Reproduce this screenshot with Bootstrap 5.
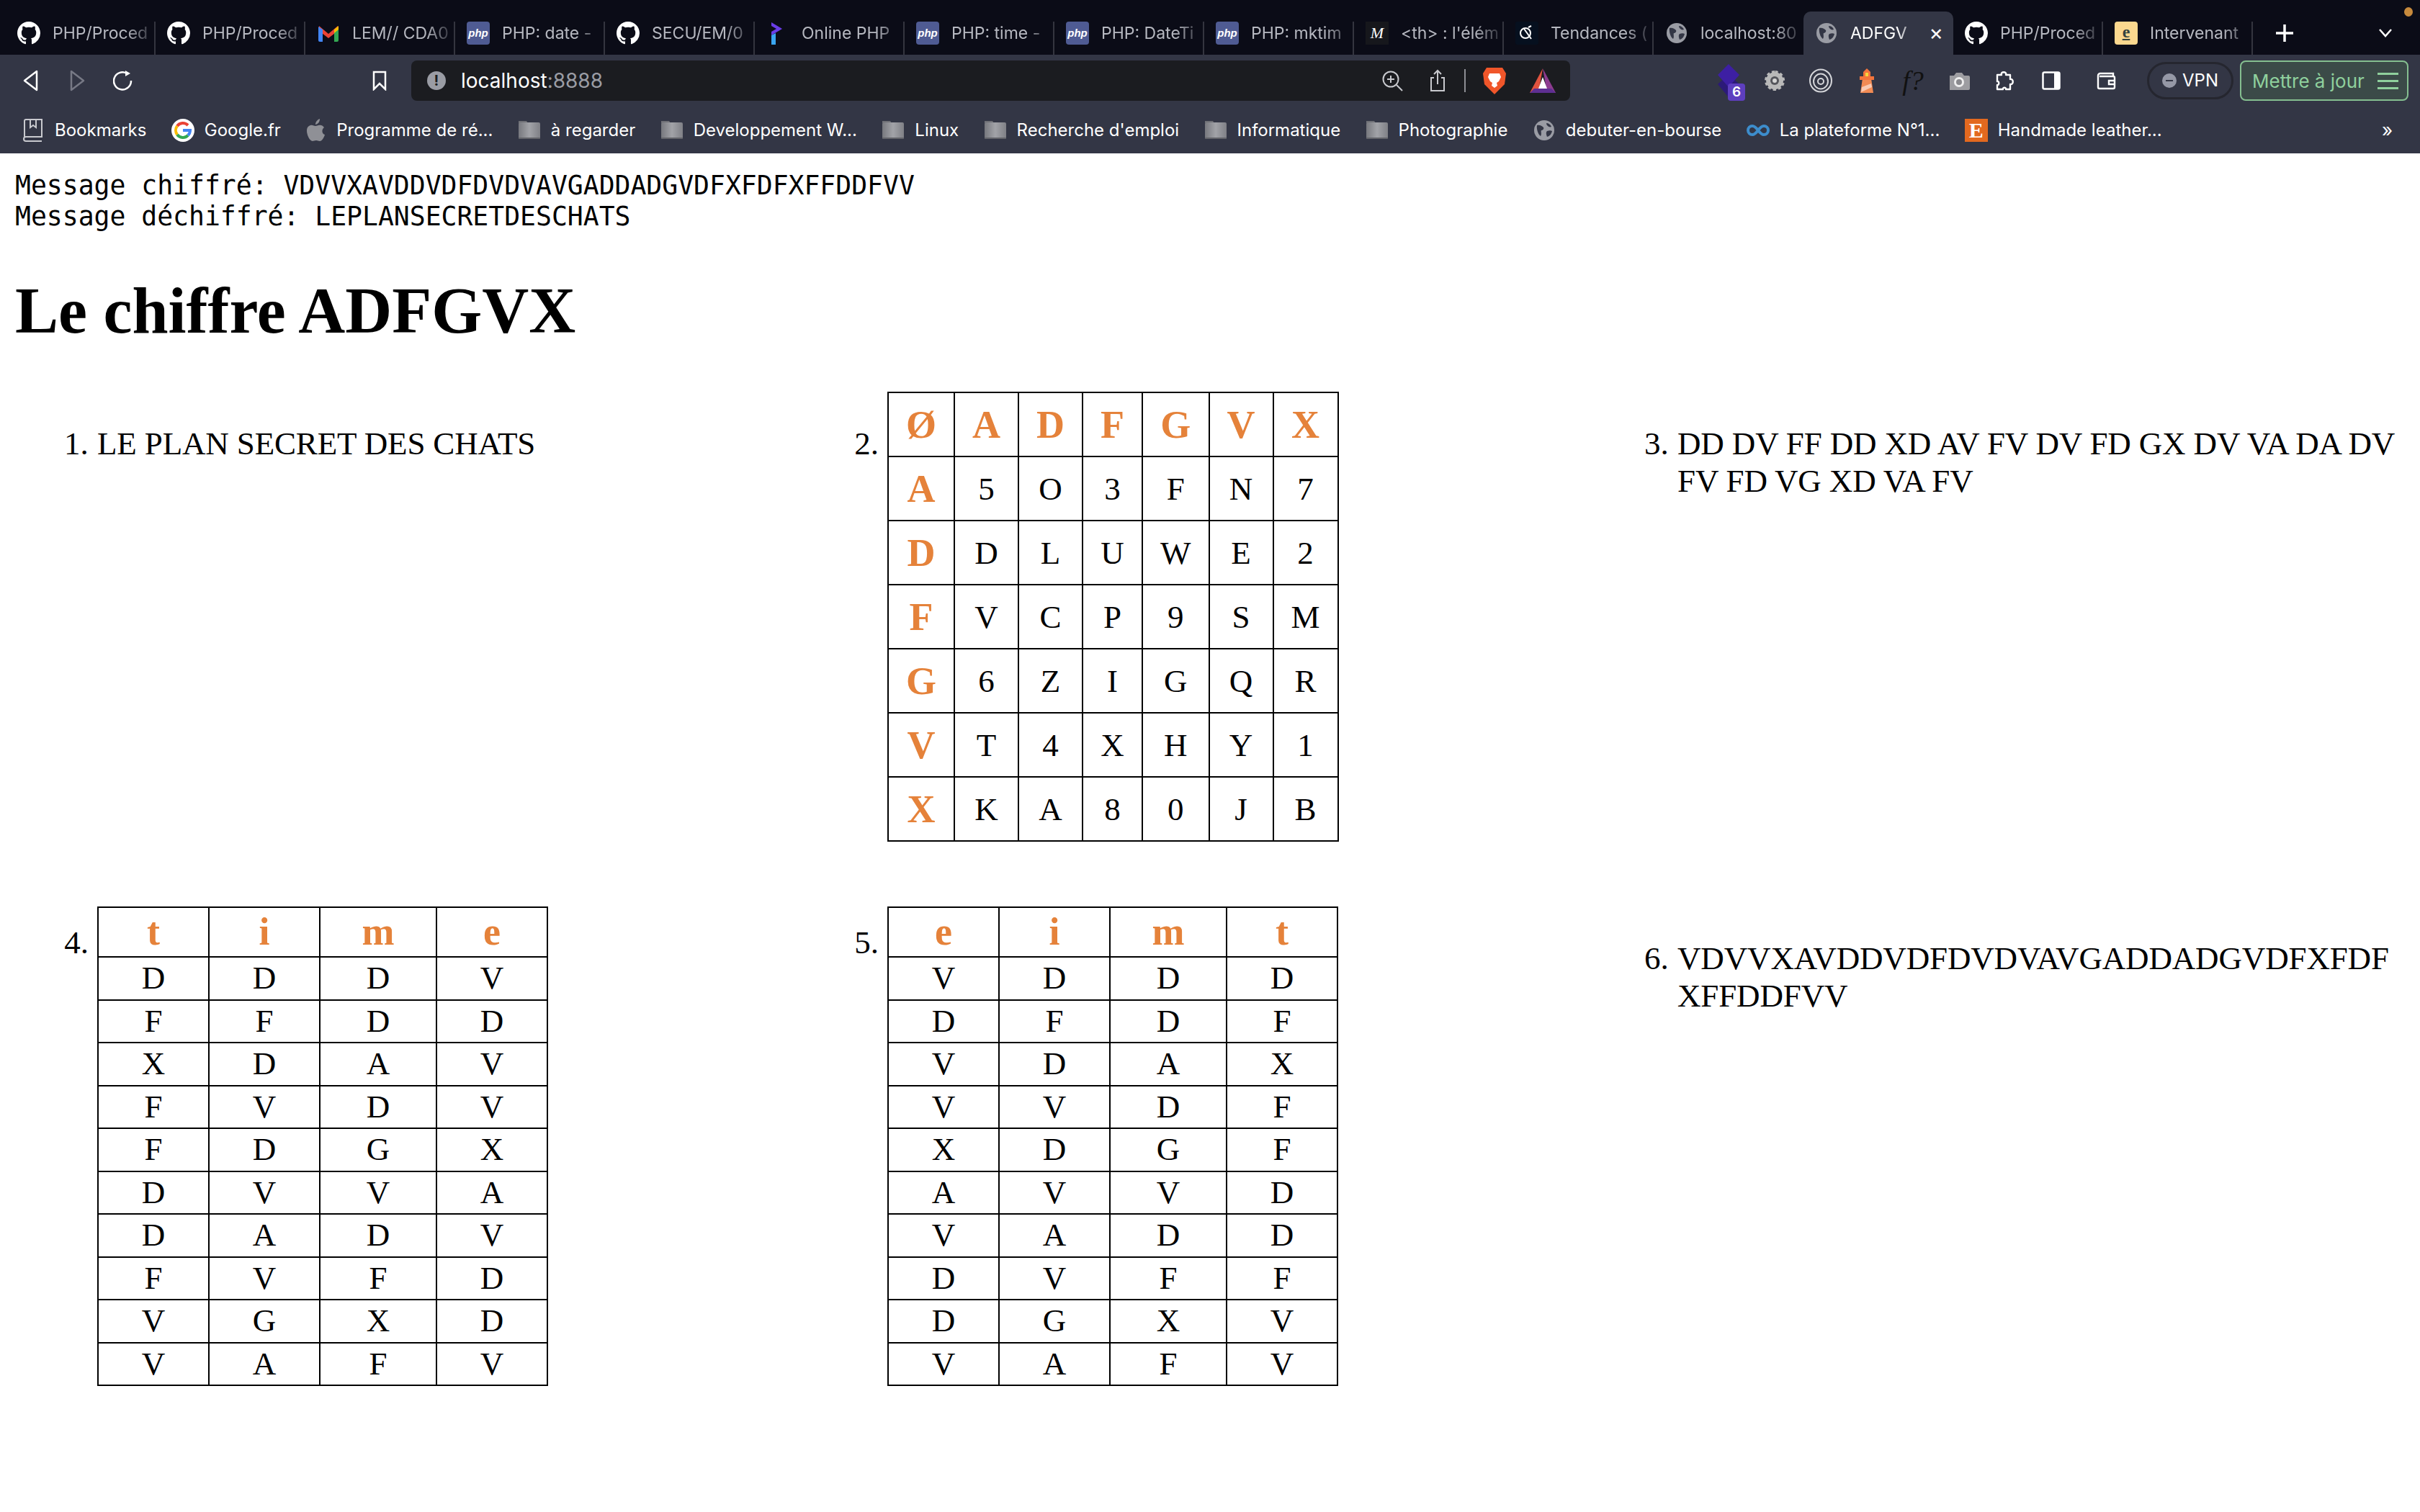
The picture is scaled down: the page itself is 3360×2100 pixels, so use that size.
<!DOCTYPE html>
<html lang="fr">
<head>
  <meta charset="UTF-8" />
  <title>ADFGVX</title>
  <link href="https://cdn.jsdelivr.net/npm/bootstrap@5.3.3/dist/css/bootstrap.min.css" rel="stylesheet">
  <style>
    html, body { background: #fff; color: #000; overflow: hidden; }
    body { height: 2100px; }
    /* browser chrome */
    .chrome { font-family: "Inter", "Liberation Sans", sans-serif; color: #fff; }
    .tabstrip { height: 76px; background: #0b0c17; padding: 16px 0 0 8px; position: relative; }
    .tabitem { width: 208px; height: 60px; padding: 14px 8px 0 16px; position: relative; color: #b6b8c0; font-size: 23px; line-height: 32px; flex: none; }
    .tabitem::after { content: ""; position: absolute; right: 0; top: 14px; bottom: 0; width: 2px; background: #34353f; }
    .tabitem.is-active { background: #333645; color: #fff; border-radius: 10px 10px 0 0; }
    .tabitem.is-active::after, .tabitem.no-sep::after { display: none; }
    .tabname { margin-left: 17px; white-space: nowrap; overflow: hidden; flex: 1; -webkit-mask-image: linear-gradient(to right, #000 76%, rgba(0,0,0,.25) 100%); mask-image: linear-gradient(to right, #000 76%, rgba(0,0,0,.25) 100%); }
    .fav { width: 32px; height: 32px; flex: none; display: block; }
    .fav-php { background: #4f5b93; border-radius: 4px; color: #fff; font: italic 700 15px/32px "Liberation Sans", sans-serif; text-align: center; }
    .fav-e { background: #fbd88f; border-radius: 4px; color: #34423f; font: 700 24px/28px "Liberation Serif", serif; text-align: center; text-decoration: underline; }
    .fav-m { background: #16171c; color: #fff; font: italic 22px/32px "Liberation Serif", serif; text-align: center; }
    .fav-etsy { background: #e3691f; color: #fff; font: 700 30px/32px "Liberation Serif", serif; text-align: center; }
    .tabclose { font-size: 30px; line-height: 30px; margin-left: 22px; margin-right: 6px; color: #fff; }
    .tabplus { width: 26px; height: 26px; margin: 17px 0 0 31px; }
    .tabchev { width: 18px; height: 12px; margin: 24px 0 0 118px; }
    .recdot { position: absolute; left: 3338px; top: 10px; width: 12px; height: 13px; border-radius: 50%; background: #c78a3c; }
    .toolbar { height: 72px; background: #333645; padding-left: 11px; padding-top: 8px; }
    .toolbtn { width: 64px; height: 56px; flex: none; }
    .toolbtn svg { display: block; }
    .bookmark-btn { margin-left: 292px; }
    .addr { width: 1609px; height: 56px; margin-left: 12px; background: #1b1c20; border-radius: 8px; font-size: 28px; padding-left: 22px; padding-right: 20px; flex: none; }
    .addr .port { color: #9a9ca4; }
    .addr-info { width: 26px; height: 26px; border-radius: 50%; background: #9a9ca4; color: #1b1c20; font-size: 20px; line-height: 26px; text-align: center; font-weight: 700; margin-right: 21px; flex: none; }
    .tool-share { margin-left: 36px; }
    .tool-sep { width: 2px; height: 32px; background: #8d8e94; margin-left: 25px; }
    .tool-brave { margin-left: 24px; }
    .tool-bat { margin-left: 33px; }
    .ext-first { margin-left: 188px; }
    .ext-wallet { margin-left: 12px; }
    .ext-ftext { font: italic 38px/1 "Liberation Serif", serif; color: #111; }
    .extbadge { position: absolute; left: 31px; top: 32px; width: 24px; height: 24px; background: #5e3fbf; border-radius: 4px; font-size: 19px; line-height: 24px; text-align: center; font-weight: 600; }
    .vpnpill { width: 120px; height: 52px; margin-top: 2px; margin-left: 25px; border: 3px solid #25262f; border-radius: 26px; font-size: 24px; flex: none; }
    .vpndot { width: 20px; height: 20px; border-radius: 50%; background: #9598a6; margin-right: 8px; position: relative; }
    .vpndot::after { content: ""; position: absolute; left: 5px; right: 5px; top: 9px; height: 2px; background: #333645; }
    .updbtn { width: 234px; height: 56px; margin-left: 9px; border: 2px solid #85bf90; border-radius: 8px; background: #3b4a48; color: #8fd09d; font-size: 26px; padding: 0 12px 0 15px; flex: none; }
    .burger { width: 29px; }
    .burger i { display: block; height: 3px; background: #8fd09d; margin: 7px 0; }
    .bookbar { height: 65px; background: #333645; padding: 0 0 0 30px; font-size: 24px; gap: 34.4px; white-space: nowrap; position: relative; }
    .bookmk { gap: 14px; }
    .bookmore { position: absolute; left: 3307px; top: 13px; font-size: 26px; }
    /* page */
    .pagebody { padding: 24px 18px 0 21px; }
    .outlog { font-family: "DejaVu Sans Mono", "Liberation Mono", monospace; font-size: 36.4px; line-height: 42.7px; margin: 0 0 58px; overflow: visible; color: #000; }
    .pagetitle { font-family: "Liberation Serif", serif; font-size: 90px; font-weight: 700; line-height: 103px; margin: 0 0 61px; }
    .stepgrid { list-style: none; margin: 0; padding: 0 0 0 68px; display: grid; grid-template-columns: repeat(3, 1fr); column-gap: 38px; row-gap: 90px; font-family: "Liberation Serif", serif; font-size: 45px; line-height: 52px; }
    .stepnum { width: 46px; flex: none; }
    .stepbody { min-width: 0; overflow-wrap: anywhere; letter-spacing: -.15px; }
    .textstep { padding-top: 46px; }
    .numbig { padding-top: 46px; text-align: right; padding-right: 12px; }
    .numsmall { padding-top: 24px; text-align: right; padding-right: 12px; }
    .gridtab { --bs-table-border-color: #000; --bs-table-color: #000; margin: 0; width: auto; align-self: flex-start; }
    .gridtab.table-bordered > :not(caption) > * > * { border-width: 2px; }
    .gridtab th { color: #e5823a; font-size: 54px; line-height: 62px; font-weight: 700; text-align: center; }
    .gridtab td { text-align: center; vertical-align: middle; }
    .keybox th, .keybox td { padding: 12.5px 24px; }
    .colbox { table-layout: fixed; width: 626px; }
    .colbox th { padding: 3px 0; line-height: 61px; width: 154px; }
    .colbox th:nth-child(3) { width: 162px; }
    .colbox td { padding: 3px 0; line-height: 51.5px; }
  </style>
</head>
<body>

<svg width="0" height="0" class="d-block position-absolute">
  <defs>
    <linearGradient id="folder-fill" x1="0" x2="1" y1="0" y2="0"><stop offset="0" stop-color="#77787e"/><stop offset=".5" stop-color="#a2a3a8"/><stop offset="1" stop-color="#7f8086"/></linearGradient>
  </defs>
  <symbol id="i-gh" viewBox="0 0 16 16"><path fill="#fff" d="M8 0C3.58 0 0 3.58 0 8c0 3.54 2.29 6.53 5.47 7.59.4.07.55-.17.55-.38 0-.19-.01-.82-.01-1.49-2.01.37-2.53-.49-2.69-.94-.09-.23-.48-.94-.82-1.13-.28-.15-.68-.52-.01-.53.63-.01 1.08.58 1.23.82.72 1.21 1.87.87 2.33.66.07-.52.28-.87.51-1.07-1.78-.2-3.64-.89-3.64-3.95 0-.87.31-1.59.82-2.15-.08-.2-.36-1.02.08-2.12 0 0 .67-.21 2.2.82.64-.18 1.32-.27 2-.27.68 0 1.36.09 2 .27 1.53-1.04 2.2-.82 2.2-.82.44 1.1.16 1.92.08 2.12.51.56.82 1.27.82 2.15 0 3.07-1.87 3.75-3.65 3.95.29.25.54.73.54 1.48 0 1.07-.01 1.93-.01 2.2 0 .21.15.46.55.38A8.013 8.013 0 0016 8c0-4.42-3.58-8-8-8z"/></symbol>
  <symbol id="i-globe" viewBox="0 0 32 32"><circle cx="16" cy="16" r="14" fill="#9a9ca4"/><path fill="#333645" d="M6 9c4-1 7 1 9 3 1 2-1 4-3 4-1 2 1 5-1 8-3-2-6-9-5-15zM19 6c3 0 6 2 7 5-2 1-4 0-5-1s-2-2-2-4zM20 17c3-1 5-1 7 0-1 4-3 7-7 8-1-3-2-6 0-8z"/></symbol>
  <symbol id="i-folder" viewBox="0 0 32 32"><path fill="#6f7076" d="M1 3h11l2 3H1z"/><rect x="1" y="5" width="30" height="23" rx="2" fill="url(#folder-fill)"/><rect x="1" y="26" width="30" height="2" rx="1" fill="#626369"/></symbol>
</svg>

<div class="chrome">
  <div class="tabstrip d-flex">
    <div class="tabitem d-flex"><svg class="fav"><use href="#i-gh"/></svg><div class="tabname">PHP/Proced</div></div>
    <div class="tabitem d-flex"><svg class="fav"><use href="#i-gh"/></svg><div class="tabname">PHP/Proced</div></div>
    <div class="tabitem d-flex">
      <svg class="fav" viewBox="0 0 32 32"><path fill="#ea4335" d="M3 6l13 11L29 6v7L16 23 3 13z"/><path fill="#4285f4" d="M2 7l6 4v17H4a2 2 0 0 1-2-2z"/><path fill="#34a853" d="M30 7l-6 4v17h4a2 2 0 0 0 2-2z"/><path fill="#fbbc04" d="M24 11l6-5v5l-6 5z"/></svg>
      <div class="tabname">LEM// CDA0</div></div>
    <div class="tabitem d-flex"><span class="fav fav-php">php</span><div class="tabname">PHP: date -</div></div>
    <div class="tabitem d-flex"><svg class="fav"><use href="#i-gh"/></svg><div class="tabname">SECU/EM/0</div></div>
    <div class="tabitem d-flex">
      <svg class="fav" viewBox="0 0 32 32"><path fill="#6a3de8" d="M7 1l15 9-15 9v-5l7-4-7-4z"/><path fill="#3aa5f0" d="M7 19l6-3v16H7z"/></svg>
      <div class="tabname">Online PHP</div></div>
    <div class="tabitem d-flex"><span class="fav fav-php">php</span><div class="tabname">PHP: time -</div></div>
    <div class="tabitem d-flex"><span class="fav fav-php">php</span><div class="tabname">PHP: DateTi</div></div>
    <div class="tabitem d-flex"><span class="fav fav-php">php</span><div class="tabname">PHP: mktim</div></div>
    <div class="tabitem d-flex"><span class="fav fav-m">M</span><div class="tabname">&lt;th&gt; : l'élém</div></div>
    <div class="tabitem d-flex">
      <svg class="fav" viewBox="0 0 32 32"><rect width="32" height="32" rx="3" fill="#06101f"/><circle cx="14" cy="16" r="7" fill="none" stroke="#fff" stroke-width="2"/><path stroke="#fff" stroke-width="2" d="M12 10l10 14M18 8l4-2"/></svg>
      <div class="tabname">Tendances (</div></div>
    <div class="tabitem d-flex no-sep"><svg class="fav"><use href="#i-globe"/></svg><div class="tabname">localhost:80</div></div>
    <div class="tabitem is-active d-flex"><svg class="fav"><use href="#i-globe"/></svg><div class="tabname">ADFGV</div><span class="tabclose">×</span></div>
    <div class="tabitem d-flex"><svg class="fav"><use href="#i-gh"/></svg><div class="tabname">PHP/Proced</div></div>
    <div class="tabitem d-flex"><span class="fav fav-e">e</span><div class="tabname">Intervenant</div></div>
    <svg class="tabplus" viewBox="0 0 26 26"><path stroke="#fff" stroke-width="3.5" d="M13 1v24M1 13h24"/></svg>
    <svg class="tabchev" viewBox="0 0 18 12"><path fill="none" stroke="#fff" stroke-width="2.5" d="M1 1l8 9 8-9"/></svg>
    <span class="recdot"></span>
  </div>

  <div class="toolbar d-flex align-items-start">
    <div class="toolbtn d-flex align-items-center justify-content-center"><svg width="24" height="30" viewBox="0 0 24 30"><path fill="none" stroke="#fff" stroke-width="2.5" stroke-linejoin="round" d="M20 2v26L3 15z"/></svg></div>
    <div class="toolbtn d-flex align-items-center justify-content-center"><svg width="24" height="30" viewBox="0 0 24 30"><path fill="none" stroke="#777985" stroke-width="2.5" stroke-linejoin="round" d="M4 2v26l17-13z"/></svg></div>
    <div class="toolbtn d-flex align-items-center justify-content-center"><svg width="28" height="30" viewBox="0 0 28 30"><path fill="none" stroke="#fff" stroke-width="2.5" d="M19 5a12 12 0 1 0 6 10"/><path fill="#fff" d="M17 1l7 4-7 4z"/></svg></div>
    <div class="toolbtn bookmark-btn d-flex align-items-center justify-content-center"><svg width="20" height="28" viewBox="0 0 20 28"><path fill="none" stroke="#fff" stroke-width="2.5" d="M2 2h16v24l-8-8-8 8z"/></svg></div>
    <div class="addr d-flex align-items-center">
      <span class="addr-info">!</span><span>localhost<span class="port">:8888</span></span>
      <svg class="ms-auto" width="30" height="30" viewBox="0 0 30 30"><circle cx="13" cy="13" r="10.5" fill="none" stroke="#c8c9ce" stroke-width="2"/><path stroke="#c8c9ce" stroke-width="2" d="M13 8v10M8 13h10M21 21l8 8"/></svg>
      <svg class="tool-share" width="24" height="32" viewBox="0 0 24 32"><path fill="none" stroke="#c8c9ce" stroke-width="2" d="M7 12H3v18h18V12h-4M12 21V2M7 7l5-5 5 5"/></svg>
      <span class="tool-sep"></span>
      <svg class="tool-brave" width="32" height="38" viewBox="0 0 32 38"><path fill="#f0562a" d="M5 1h22l5 8-2 15-14 14L2 24 0 9z"/><path fill="#fff" d="M9 9h14l2 5-3 6-3 2 1 4-4 3-4-3 1-4-3-2-3-6z"/></svg>
      <svg class="tool-bat" width="36" height="34" viewBox="0 0 36 34"><path fill="#e0533f" d="M18 0L0 34h12z"/><path fill="#8d3b8f" d="M18 0l18 34H24z"/><path fill="#fff" d="M18 12l-6 16h12z"/><path fill="#5e2f92" d="M6 28h24l6 6H0z"/></svg>
    </div>
    <div class="toolbtn position-relative d-flex align-items-center justify-content-center ext-first"><svg width="32" height="46" viewBox="0 0 32 46"><path fill="#2c1a78" d="M16 14l15 14-15 18L1 28z"/><path fill="#3d1fa3" d="M16 0l15 15-15 17L1 15z"/></svg><span class="extbadge">6</span></div>
    <div class="toolbtn d-flex align-items-center justify-content-center"><svg width="30" height="34" viewBox="0 0 30 34"><path fill="#b9b9b9" stroke="#b9b9b9" stroke-width="4" stroke-dasharray="4 3" d="M15 5a12 12 0 1 0 .1 0z"/><circle cx="15" cy="17" r="6" fill="#55565c"/><circle cx="15" cy="17" r="3" fill="#d5d5d5"/></svg></div>
    <div class="toolbtn d-flex align-items-center justify-content-center"><svg width="32" height="34" viewBox="0 0 32 34"><g fill="none" stroke="#d4d5d9" stroke-width="2"><ellipse cx="16" cy="17" rx="15" ry="15.5"/><ellipse cx="16" cy="18" rx="10" ry="10.5"/><circle cx="16" cy="18" r="4"/></g></svg></div>
    <div class="toolbtn d-flex align-items-center justify-content-center"><svg width="24" height="34" viewBox="0 0 24 34"><path fill="#f28b54" d="M6 14h12l3 20H3z"/><path fill="#fff" opacity=".55" d="M5 26l13-5 1 5-15 7z"/><rect x="2" y="11" width="20" height="5" fill="#f4743b"/><rect x="7" y="5" width="10" height="7" fill="#f4743b"/><rect x="10" y="6" width="4" height="5" fill="#f5d53f"/><path fill="#f4743b" d="M12 0l5 5H7z"/></svg></div>
    <div class="toolbtn d-flex align-items-center justify-content-center"><span class="ext-ftext">f?</span></div>
    <div class="toolbtn d-flex align-items-center justify-content-center"><svg width="30" height="30" viewBox="0 0 30 30"><path fill="#9d9da1" d="M2 8h6l3-4h8l3 4h6a2 2 0 0 1 2 2v16a2 2 0 0 1-2 2H2z"/><circle cx="15" cy="17" r="7" fill="#eee"/><circle cx="15" cy="17" r="4" fill="#8a8a8e"/></svg></div>
    <div class="toolbtn d-flex align-items-center justify-content-center"><svg width="28" height="30" viewBox="0 0 28 30"><path fill="none" stroke="#fff" stroke-width="2.4" stroke-linejoin="round" d="M3 7h6c-2-5 8-5 6 0h6v6c5-1 5 8 0 7v7h-6c1-3-5-3-4 0H3v-6c3 1 3-6 0-5z"/></svg></div>
    <div class="toolbtn d-flex align-items-center justify-content-center"><svg width="26" height="26" viewBox="0 0 26 26"><rect x="1.5" y="1.5" width="23" height="23" rx="2" fill="none" stroke="#fff" stroke-width="2.5"/><rect x="17" y="2" width="7" height="22" fill="#fff"/></svg></div>
    <div class="toolbtn d-flex align-items-center justify-content-center ext-wallet"><svg width="28" height="26" viewBox="0 0 28 26"><path fill="none" stroke="#fff" stroke-width="2.4" d="M24 7V3H6a3 3 0 0 0-3 3v16a2 2 0 0 0 2 2h19a2 2 0 0 0 2-2V9a2 2 0 0 0-2-2H5M26 13h-8v5h8"/></svg></div>
    <div class="vpnpill d-flex align-items-center justify-content-center"><span class="vpndot"></span>VPN</div>
    <div class="updbtn d-flex align-items-center justify-content-between"><span>Mettre à jour</span><span class="burger"><i></i><i></i><i></i></span></div>
  </div>

  <div class="bookbar d-flex align-items-center">
    <div class="bookmk d-flex align-items-center"><svg width="32" height="32" viewBox="0 0 32 32"><path fill="none" stroke="#c8c9ce" stroke-width="2" d="M4 26V3a2 2 0 0 1 2-2h22v24H6a3 3 0 0 0 0 6h22M12 1v11l4-3 4 3V1"/></svg>Bookmarks</div>
    <div class="bookmk d-flex align-items-center"><svg width="32" height="32" viewBox="0 0 32 32"><circle cx="16" cy="16" r="16" fill="#fff"/><path fill="none" stroke="#ea4335" stroke-width="4" d="M23 9a10 10 0 0 0-15 1"/><path fill="none" stroke="#fbbc04" stroke-width="4" d="M8 10a10 10 0 0 0 0 12"/><path fill="none" stroke="#34a853" stroke-width="4" d="M8 22a10 10 0 0 0 15 1"/><path fill="none" stroke="#4285f4" stroke-width="4" d="M23 23a10 10 0 0 0 3-7H16"/></svg>Google.fr</div>
    <div class="bookmk d-flex align-items-center"><svg width="29" height="32" viewBox="0 0 29 32"><path fill="#8f9096" d="M7 9c3-1 5 1 7 1s4-2 8-1c2 .5 3 2 4 3-4 3-3 9 1 10-1 4-4 9-7 9-2 0-3-1-5-1s-4 1-5 1C6 31 2 22 2 17 2 12 4 10 7 9zM14 8c0-4 3-7 6-8 0 4-2 7-6 8z"/></svg>Programme de ré...</div>
    <div class="bookmk d-flex align-items-center"><svg width="32" height="32"><use href="#i-folder"/></svg>à regarder</div>
    <div class="bookmk d-flex align-items-center"><svg width="32" height="32"><use href="#i-folder"/></svg>Developpement W...</div>
    <div class="bookmk d-flex align-items-center"><svg width="32" height="32"><use href="#i-folder"/></svg>Linux</div>
    <div class="bookmk d-flex align-items-center"><svg width="32" height="32"><use href="#i-folder"/></svg>Recherche d'emploi</div>
    <div class="bookmk d-flex align-items-center"><svg width="32" height="32"><use href="#i-folder"/></svg>Informatique</div>
    <div class="bookmk d-flex align-items-center"><svg width="32" height="32"><use href="#i-folder"/></svg>Photographie</div>
    <div class="bookmk d-flex align-items-center"><svg width="32" height="32"><use href="#i-globe"/></svg>debuter-en-bourse</div>
    <div class="bookmk d-flex align-items-center"><svg width="32" height="32" viewBox="0 0 32 32"><path fill="none" stroke="#3d8dcc" stroke-width="4" d="M16 16c-3-4-5-6-8-6a6 6 0 0 0 0 12c3 0 5-2 8-6s5-6 8-6a6 6 0 0 1 0 12c-3 0-5-2-8-6z"/></svg>La plateforme N°1...</div>
    <div class="bookmk d-flex align-items-center"><span class="fav fav-etsy">E</span>Handmade leather...</div>
    <span class="bookmore">»</span>
  </div>
</div>

<div class="pagebody">
  <pre class="outlog">Message chiffré: VDVVXAVDDVDFDVDVAVGADDADGVDFXFDFXFFDDFVV
Message déchiffré: LEPLANSECRETDESCHATS</pre>
  <h1 class="pagetitle">Le chiffre ADFGVX</h1>

  <ol class="stepgrid">
    <li class="d-flex"><span class="stepnum textstep text-nowrap">1.</span><div class="stepbody textstep">LE PLAN SECRET DES CHATS</div></li>
    <li class="d-flex"><span class="stepnum numbig">2.</span>
      <table class="table table-bordered gridtab keybox">
        <thead><tr><th>Ø</th><th>A</th><th>D</th><th>F</th><th>G</th><th>V</th><th>X</th></tr></thead>
        <tbody>
          <tr><th>A</th><td>5</td><td>O</td><td>3</td><td>F</td><td>N</td><td>7</td></tr>
          <tr><th>D</th><td>D</td><td>L</td><td>U</td><td>W</td><td>E</td><td>2</td></tr>
          <tr><th>F</th><td>V</td><td>C</td><td>P</td><td>9</td><td>S</td><td>M</td></tr>
          <tr><th>G</th><td>6</td><td>Z</td><td>I</td><td>G</td><td>Q</td><td>R</td></tr>
          <tr><th>V</th><td>T</td><td>4</td><td>X</td><td>H</td><td>Y</td><td>1</td></tr>
          <tr><th>X</th><td>K</td><td>A</td><td>8</td><td>0</td><td>J</td><td>B</td></tr>
        </tbody>
      </table>
    </li>
    <li class="d-flex"><span class="stepnum textstep">3.</span><div class="stepbody textstep">DD DV FF DD XD AV FV DV FD GX DV VA DA DV FV FD VG XD VA FV</div></li>

    <li class="d-flex"><span class="stepnum numsmall">4.</span>
      <table class="table table-bordered gridtab colbox">
        <thead><tr><th>t</th><th>i</th><th>m</th><th>e</th></tr></thead>
        <tbody>
          <tr><td>D</td><td>D</td><td>D</td><td>V</td></tr>
          <tr><td>F</td><td>F</td><td>D</td><td>D</td></tr>
          <tr><td>X</td><td>D</td><td>A</td><td>V</td></tr>
          <tr><td>F</td><td>V</td><td>D</td><td>V</td></tr>
          <tr><td>F</td><td>D</td><td>G</td><td>X</td></tr>
          <tr><td>D</td><td>V</td><td>V</td><td>A</td></tr>
          <tr><td>D</td><td>A</td><td>D</td><td>V</td></tr>
          <tr><td>F</td><td>V</td><td>F</td><td>D</td></tr>
          <tr><td>V</td><td>G</td><td>X</td><td>D</td></tr>
          <tr><td>V</td><td>A</td><td>F</td><td>V</td></tr>
        </tbody>
      </table>
    </li>
    <li class="d-flex"><span class="stepnum numsmall">5.</span>
      <table class="table table-bordered gridtab colbox">
        <thead><tr><th>e</th><th>i</th><th>m</th><th>t</th></tr></thead>
        <tbody>
          <tr><td>V</td><td>D</td><td>D</td><td>D</td></tr>
          <tr><td>D</td><td>F</td><td>D</td><td>F</td></tr>
          <tr><td>V</td><td>D</td><td>A</td><td>X</td></tr>
          <tr><td>V</td><td>V</td><td>D</td><td>F</td></tr>
          <tr><td>X</td><td>D</td><td>G</td><td>F</td></tr>
          <tr><td>A</td><td>V</td><td>V</td><td>D</td></tr>
          <tr><td>V</td><td>A</td><td>D</td><td>D</td></tr>
          <tr><td>D</td><td>V</td><td>F</td><td>F</td></tr>
          <tr><td>D</td><td>G</td><td>X</td><td>V</td></tr>
          <tr><td>V</td><td>A</td><td>F</td><td>V</td></tr>
        </tbody>
      </table>
    </li>
    <li class="d-flex"><span class="stepnum textstep">6.</span><div class="stepbody textstep">VDVVXAVDDVDFDVDVAVGADDADGVDFXFDFXFFDDFVV</div></li>
  </ol>
</div>

</body>
</html>
